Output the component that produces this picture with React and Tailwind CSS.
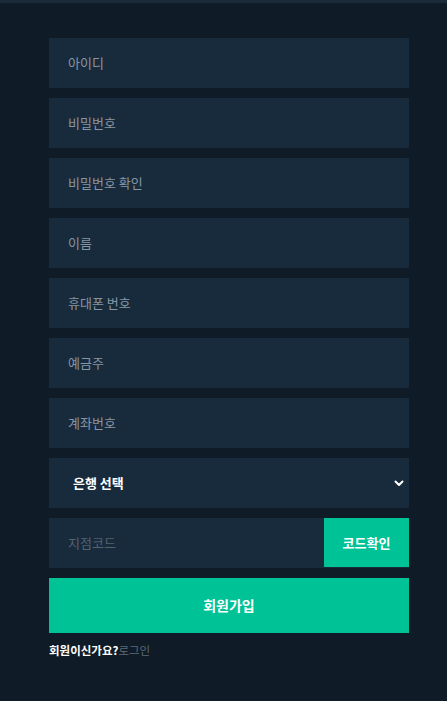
import React from "react";

const fields = ["아이디", "비밀번호", "비밀번호 확인", "이름", "휴대폰 번호", "예금주", "계좌번호"];

export default function App() {
  return (
    <div
      className="min-h-[701px] bg-[#0f1b26] border-t-[3px] border-[#1a2b3c]"
      style={{ fontFamily: '"Noto Sans CJK KR", "Noto Sans", sans-serif' }}
    >
      <div className="w-[360px] ml-[49px] pt-[35px] flex flex-col gap-[10px]">
        {fields.map((f) => (
          <div key={f} className="h-[50px] bg-[#182b3d] flex items-center pl-[19px] text-[13px] text-[#8795a3]">
            {f}
          </div>
        ))}
        <div className="h-[50px] bg-[#182b3d] flex items-center justify-between pl-[24px] pr-[4px] text-[13px] font-bold text-white">
          <span>은행 선택</span>
          <svg width="12" height="12" viewBox="0 0 24 24" fill="none" stroke="white" strokeWidth="4" strokeLinecap="round" strokeLinejoin="round">
            <path d="M5 9l7 7 7-7" />
          </svg>
        </div>
        <div className="h-[50px] bg-[#182b3d] flex">
          <div className="flex-1 flex items-center pl-[19px] text-[13px] text-[#55626e]">지점코드</div>
          <button className="w-[85px] h-[49px] bg-[#00c297] text-white text-[13px] font-bold">코드확인</button>
        </div>
        <button className="h-[55px] bg-[#00c297] text-white text-[14px] font-bold">회원가입</button>
        <div className="text-[11.5px] leading-[16px] -mt-[1px]">
          <span className="text-white font-bold">회원이신가요?</span>
          <span className="text-[#5e6a75]">로그인</span>
        </div>
      </div>
    </div>
  );
}
